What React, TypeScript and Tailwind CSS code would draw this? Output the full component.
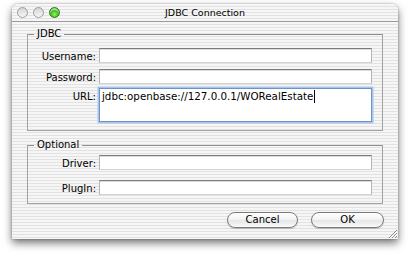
import React from "react";

const pinstripe =
  "bg-[image:repeating-linear-gradient(to_bottom,#f6f6f6_0px,#f6f6f6_2px,#e2e2e2_2px,#e2e2e2_3px)]";

function Field({ h = "h-[15px]" }: { h?: string }) {
  return (
    <div
      className={`${h} flex-1 bg-white border border-t-[#7c7c7c] border-x-[#b4b4b4] border-b-[#d2d2d2] shadow-[inset_0_1px_0_#dcdcdc]`}
    />
  );
}

function Row({ label, mt }: { label: string; mt: string }) {
  return (
    <div className={`flex items-start ${mt} pr-[10px]`}>
      <span className="w-[68px] mr-[3px] text-right text-[10px] leading-[15px] pt-[1px] text-black">
        {label}
      </span>
      <Field />
    </div>
  );
}

function Light({ green }: { green?: boolean }) {
  return green ? (
    <div className="w-[11px] h-[11px] rounded-full border border-[#2f7a12] bg-[image:radial-gradient(circle_at_50%_70%,#9cf56a_0%,#3fc11b_45%,#1e8a08_100%)] shadow-[inset_0_2px_1px_rgba(255,255,255,0.6)]" />
  ) : (
    <div className="w-[11px] h-[11px] rounded-full border border-[#9c9c9c] bg-[image:linear-gradient(to_bottom,#d4d4d4,#f6f6f6)]" />
  );
}

function Button({ children, w }: { children: React.ReactNode; w: string }) {
  return (
    <div
      className={`${w} h-[16px] rounded-full border border-[#7a7a7a] bg-[image:linear-gradient(to_bottom,#ffffff_0%,#f4f4f4_45%,#e6e6e6_55%,#fbfbfb_100%)] shadow-[0_1px_1px_rgba(0,0,0,0.2)] flex items-center justify-center text-[10px] leading-[14px] text-black`}
    >
      {children}
    </div>
  );
}

export default function App() {
  return (
    <div className="w-[410px] h-[259px] bg-white pt-[4px] pl-[12px] font-[family-name:'DejaVu_Sans',Verdana,sans-serif]">
      <div
        className={`w-[386px] h-[235px] rounded-t-[6px] ${pinstripe} shadow-[0_4px_9px_rgba(0,0,0,0.55),0_0_2px_rgba(0,0,0,0.35)] flex flex-col overflow-hidden`}
      >
        {/* title bar */}
        <div className="h-[18px] border-b border-[#9a9a9a] grid grid-cols-[1fr_auto_1fr] items-center">
          <div className="flex items-center gap-[5px] pl-[5px]">
            <Light />
            <Light />
            <Light green />
          </div>
          <div className="text-[9.5px] leading-[14px] text-black">JDBC Connection</div>
          <div />
        </div>

        {/* JDBC group */}
        <fieldset className="mx-[15px] mt-[6px] border border-[#a2a2a2] border-t-[#8e8e8e] pb-[8px] min-w-0">
          <legend className="ml-[6px] px-[3px] text-[10px] leading-[12px] text-black">JDBC</legend>
          <Row label="Username:" mt="mt-[8px]" />
          <Row label="Password:" mt="mt-[5px]" />
          <div className="flex items-start mt-[3px] pr-[10px]">
            <span className="w-[68px] mr-[3px] text-right text-[10px] leading-[15px] pt-[1px] text-black">
              URL:
            </span>
            <div className="h-[34px] flex-1 bg-white border border-[#6f93c8] shadow-[0_0_0_1.5px_#a8c4ea] px-[2px]">
              <div className="flex items-center text-[10.3px] leading-[14px] text-black whitespace-nowrap">
                <span>jdbc:openbase://127.0.0.1/WORealEstate</span>
                <span className="inline-block w-[1px] h-[13px] bg-black ml-[1px]" />
              </div>
            </div>
          </div>
        </fieldset>

        {/* Optional group */}
        <fieldset className="mx-[15px] mt-[8px] border border-[#a2a2a2] border-t-[#8e8e8e] pb-[7px] min-w-0">
          <legend className="ml-[6px] px-[3px] text-[10px] leading-[12px] text-black">Optional</legend>
          <Row label="Driver:" mt="mt-[4px]" />
          <Row label="PlugIn:" mt="mt-[9px]" />
        </fieldset>

        {/* buttons */}
        <div className="flex justify-end gap-[13px] pr-[14px] mt-[8px]">
          <Button w="w-[71px]">Cancel</Button>
          <Button w="w-[73px]">OK</Button>
        </div>

        <div className="flex-1 flex items-end justify-end pr-[1px] pb-[1px]">
          <svg width="10" height="10" viewBox="0 0 10 10">
            <line x1="2" y1="10" x2="10" y2="2" stroke="#8a8a8a" strokeWidth="1" />
            <line x1="3" y1="10" x2="10" y2="3" stroke="#ffffff" strokeWidth="1" />
            <line x1="5" y1="10" x2="10" y2="5" stroke="#8a8a8a" strokeWidth="1" />
            <line x1="6" y1="10" x2="10" y2="6" stroke="#ffffff" strokeWidth="1" />
            <line x1="8" y1="10" x2="10" y2="8" stroke="#8a8a8a" strokeWidth="1" />
          </svg>
        </div>
      </div>
    </div>
  );
}
